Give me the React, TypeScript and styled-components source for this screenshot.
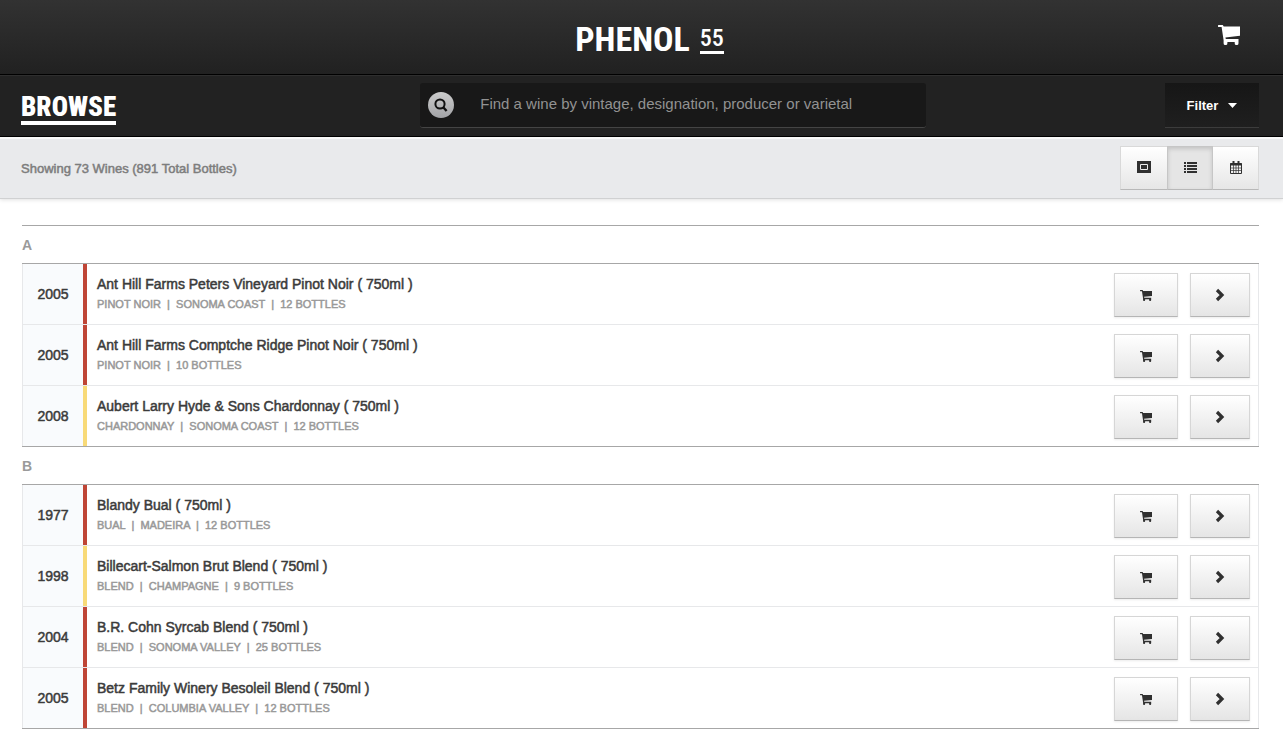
import React from "react";
import styled, { createGlobalStyle } from "styled-components";

const GlobalStyle = createGlobalStyle`
  *, *::before, *::after { box-sizing: border-box; }
  body {
    margin: 0;
    background: #fff;
    color: #3b3b3b;
    font-family: "Liberation Sans", Arial, sans-serif;
    font-size: 14px;
  }
`;

const TopBar = styled.header`
  display: grid;
  grid-template-columns: 1fr auto 1fr;
  align-items: center;
  height: 75px;
  padding: 0 43px 4px;
  background: linear-gradient(#323232, #212121);
  border-bottom: 1px solid #000;
  color: #fff;
`;

const Logo = styled.a`
  grid-column: 2;
  display: flex;
  align-items: flex-end;
  gap: 10px;
  margin-left: 16px;
  padding-top: 8px;
  color: #fff;
  text-decoration: none;
  font-family: "Roboto Condensed", Roboto, sans-serif;
  font-size: 34px;
  font-weight: 700;
  line-height: 30px;
`;

const LogoNumber = styled.span`
  border-bottom: 3px solid #fff;
  font-size: 24px;
  font-weight: 500;
  line-height: 26px;
`;

const IconButton = styled.button`
  justify-self: end;
  display: flex;
  padding: 0;
  border: 0;
  background: none;
  color: #fff;
  cursor: pointer;
`;

const BrowseBar = styled.div`
  display: grid;
  grid-template-columns: 6fr minmax(0, 506px) 5fr;
  align-items: center;
  height: 62px;
  padding: 0 24px 1px 21px;
  background: #222;
  border-top: 1px solid #2e2e2e;
  border-bottom: 1px solid #000;
`;

const Heading = styled.h1`
  justify-self: start;
  margin: 0;
  padding-top: 6px;
  border-bottom: 4px solid #fff;
  color: #fff;
  font-family: "Roboto Condensed", Roboto, sans-serif;
  font-size: 27px;
  font-weight: 900;
  line-height: 28px;
`;

const SearchBox = styled.label`
  display: flex;
  align-items: center;
  gap: 26px;
  height: 45px;
  padding: 0 8px;
  background: #181818;
  border-bottom: 1px solid #444;
  border-radius: 3px;
`;

const SearchBadge = styled.span`
  display: grid;
  place-items: center;
  width: 26px;
  height: 26px;
  border-radius: 50%;
  background: linear-gradient(#ccc, #a2a3a6);
  color: #111;
`;

const SearchInput = styled.input`
  flex: 1;
  min-width: 0;
  padding: 0 0 3px;
  border: 0;
  outline: 0;
  background: none;
  color: #ddd;
  font: 15px "Liberation Sans", Arial, sans-serif;
  &::placeholder { color: #929292; opacity: 1; }
`;

const FilterButton = styled.button`
  justify-self: end;
  display: flex;
  align-items: center;
  justify-content: center;
  gap: 10px;
  width: 94px;
  height: 45px;
  padding: 0;
  border: 0;
  border-bottom: 1px solid #3c3c3c;
  background: linear-gradient(#161616, #1f1f1f);
  color: #fff;
  font: 700 13px "Liberation Sans", Arial, sans-serif;
  cursor: pointer;
`;

const SummaryBar = styled.div`
  display: flex;
  align-items: center;
  justify-content: space-between;
  height: 62px;
  padding: 0 24px 1px 21px;
  background: #e9eaec;
  border-top: 2px solid #f8f8f8;
  border-bottom: 1px solid #d0d1d2;
  box-shadow: 0 1px 4px rgba(0, 0, 0, 0.12);
`;

const Summary = styled.p`
  margin: 0;
  color: #7d7d7d;
  font-size: 13px;
  -webkit-text-stroke: 0.5px currentColor;
`;

const ViewSwitch = styled.div`
  display: flex;
`;

const ViewButton = styled.button<{ $active?: boolean; $wide?: boolean }>`
  display: grid;
  place-items: center;
  width: ${(p) => (p.$wide ? 47 : 46)}px;
  height: 44px;
  padding: 0 0 2px;
  border: 1px solid ${(p) => (p.$active ? "#c6c6c6" : "#d9d9d9")};
  border-left-width: ${(p) => (p.$active || p.$wide ? 1 : 0)}px;
  border-right-width: ${(p) => (p.$wide ? 0 : 1)}px;
  border-bottom-color: #b8b8b8;
  background: ${(p) => (p.$active ? "#e5e5e5" : "linear-gradient(#fff, #e6e6e6)")};
  box-shadow: ${(p) => (p.$active ? "inset 0 2px 4px rgba(0, 0, 0, 0.15)" : "none")};
  color: #303030;
  cursor: pointer;
`;

const List = styled.main`
  margin: 26px 24px 0 22px;
  border-top: 1px solid #a7a7a7;
`;

const GroupTitle = styled.h2`
  margin: 0;
  padding-top: 2px;
  color: #9a9a9a;
  font-size: 14px;
  font-weight: 700;
  line-height: 35px;
`;

const Group = styled.ul`
  margin: 0;
  padding: 0;
  list-style: none;
  border-top: 1px solid #a7a7a7;
  border-bottom: 1px solid #a7a7a7;
`;

const Row = styled.li`
  display: flex;
  align-items: stretch;
  height: 61px;
  border: 1px solid #e7e8ea;
  border-top: 0;
  &:last-child { height: 60px; border-bottom: 0; }
`;

const Vintage = styled.div`
  display: grid;
  place-items: center;
  width: 60px;
  background: #f9fbfd;
  font-size: 14px;
  -webkit-text-stroke: 0.5px currentColor;
`;

const Stripe = styled.div<{ $color: string }>`
  width: 4px;
  background: ${(p) => p.$color};
`;

const Info = styled.div`
  flex: 1;
  min-width: 0;
  padding: 10px 10px 0;
`;

const WineName = styled.h3`
  margin: 0;
  font-size: 14px;
  font-weight: 400;
  line-height: 20px;
  -webkit-text-stroke: 0.5px currentColor;
`;

const Details = styled.p`
  margin: 0;
  color: #999;
  font-size: 11px;
  line-height: 20px;
  text-transform: uppercase;
  white-space: pre;
  -webkit-text-stroke: 0.5px currentColor;
`;

const Actions = styled.div`
  display: flex;
  gap: 12px;
  padding: 9px 8px 0 0;
`;

const ActionButton = styled.button<{ $wide?: boolean }>`
  display: grid;
  place-items: center;
  width: ${(p) => (p.$wide ? 64 : 60)}px;
  height: 44px;
  padding: 0;
  border: 1px solid #d6d6d6;
  border-bottom-color: #b5b5b5;
  background: linear-gradient(#fff, #e5e5e5);
  box-shadow: 0 1px 2px rgba(0, 0, 0, 0.08);
  color: #303030;
  cursor: pointer;
`;

const CartIcon = ({ width, height }: { width: number; height: number }) => (
  <svg width={width} height={height} viewBox="0 0 22 20" fill="currentColor" aria-hidden="true">
    <path d="M.8 0h4l.9 1.600H22v9.200L7.400 12.500l.4 1.500h12.700v4.200a1.800 1.800 0 0 1-3.800 0V17H9.400v1.200a1.900 1.900 0 0 1-3.800 0v-3L3.600 2H.8a1 1 0 0 1 0-2z" />
  </svg>
);

const ChevronIcon = () => (
  <svg width="10" height="14" viewBox="0 0 10 14" fill="none" stroke="currentColor" strokeWidth="3.200" aria-hidden="true">
    <path d="M2 2l5 5-5 5" />
  </svg>
);

const SearchIcon = () => (
  <svg width="14" height="14" viewBox="0 0 14 14" fill="none" stroke="currentColor" strokeWidth="2" aria-hidden="true">
    <circle cx="6" cy="6" r="4.6" />
    <path d="M9 9l3.6 4" strokeWidth="2.4" />
  </svg>
);

const CaretIcon = () => (
  <svg width="9" height="5" viewBox="0 0 9 5" fill="currentColor" aria-hidden="true">
    <path d="M0 0h9L4.500 5z" />
  </svg>
);

const GalleryIcon = () => (
  <svg width="14" height="12" viewBox="0 0 14 12" aria-hidden="true">
    <path d="M0 0h14v12H0z" fill="currentColor" />
    <path d="M3.500 3.500h7v5h-7z" fill="none" stroke="#eee" />
  </svg>
);

const ListIcon = () => (
  <svg width="13" height="11" viewBox="0 0 13 11" fill="currentColor" aria-hidden="true">
    <path d="M0 0h2v2H0zM3 0h10v2H3zM0 3h2v2H0zM3 3h10v2H3zM0 6h2v2H0zM3 6h10v2H3zM0 9h2v2H0zM3 9h10v2H3z" />
  </svg>
);

const CalendarIcon = () => (
  <svg width="12" height="13" viewBox="0 0 12 13" fill="none" stroke="currentColor" aria-hidden="true">
    <path d="M.5 2.500h11v10H.5z" />
    <path d="M0 3.500h12" strokeWidth="2" />
    <path d="M3.500 0v3M8.500 0v3" strokeWidth="2" />
    <path d="M3.500 4v8M6 4v8M8.500 4v8M1 7h10M1 9.500h10" strokeWidth=".7" />
  </svg>
);

const RED = "#bf4536";
const YELLOW = "#f8da78";

type Wine = { year: number; color: string; name: string; details: string[] };

const groups: { letter: string; wines: Wine[] }[] = [
  {
    letter: "A",
    wines: [
      { year: 2005, color: RED, name: "Ant Hill Farms Peters Vineyard Pinot Noir", details: ["Pinot Noir", "Sonoma Coast", "12 Bottles"] },
      { year: 2005, color: RED, name: "Ant Hill Farms Comptche Ridge Pinot Noir", details: ["Pinot Noir", "10 Bottles"] },
      { year: 2008, color: YELLOW, name: "Aubert Larry Hyde & Sons Chardonnay", details: ["Chardonnay", "Sonoma Coast", "12 Bottles"] },
    ],
  },
  {
    letter: "B",
    wines: [
      { year: 1977, color: RED, name: "Blandy Bual", details: ["Bual", "Madeira", "12 Bottles"] },
      { year: 1998, color: YELLOW, name: "Billecart-Salmon Brut Blend", details: ["Blend", "Champagne", "9 Bottles"] },
      { year: 2004, color: RED, name: "B.R. Cohn Syrcab Blend", details: ["Blend", "Sonoma Valley", "25 Bottles"] },
      { year: 2005, color: RED, name: "Betz Family Winery Besoleil Blend", details: ["Blend", "Columbia Valley", "12 Bottles"] },
    ],
  },
];

export default function App() {
  return (
    <>
      <GlobalStyle />
      <TopBar>
        <Logo href="#">
          PHENOL <LogoNumber>55</LogoNumber>
        </Logo>
        <IconButton aria-label="Cart">
          <CartIcon width={22} height={20} />
        </IconButton>
      </TopBar>
      <BrowseBar>
        <Heading>BROWSE</Heading>
        <SearchBox>
          <SearchBadge>
            <SearchIcon />
          </SearchBadge>
          <SearchInput
            type="text"
            aria-label="Find a wine"
            placeholder="Find a wine by vintage, designation, producer or varietal"
          />
        </SearchBox>
        <FilterButton>
          Filter <CaretIcon />
        </FilterButton>
      </BrowseBar>
      <SummaryBar>
        <Summary>Showing 73 Wines (891 Total Bottles)</Summary>
        <ViewSwitch>
          <ViewButton $wide aria-label="Gallery view">
            <GalleryIcon />
          </ViewButton>
          <ViewButton $active aria-label="List view">
            <ListIcon />
          </ViewButton>
          <ViewButton aria-label="Calendar view">
            <CalendarIcon />
          </ViewButton>
        </ViewSwitch>
      </SummaryBar>
      <List>
        {groups.map((group) => (
          <section key={group.letter}>
            <GroupTitle>{group.letter}</GroupTitle>
            <Group>
              {group.wines.map((wine) => (
                <Row key={wine.name}>
                  <Vintage>{wine.year}</Vintage>
                  <Stripe $color={wine.color} />
                  <Info>
                    <WineName>{wine.name} ( 750ml )</WineName>
                    <Details>{wine.details.join("  |  ")}</Details>
                  </Info>
                  <Actions>
                    <ActionButton $wide aria-label={`Add ${wine.name} to cart`}>
                      <CartIcon width={12} height={11} />
                    </ActionButton>
                    <ActionButton aria-label={`Open ${wine.name}`}>
                      <ChevronIcon />
                    </ActionButton>
                  </Actions>
                </Row>
              ))}
            </Group>
          </section>
        ))}
      </List>
    </>
  );
}
